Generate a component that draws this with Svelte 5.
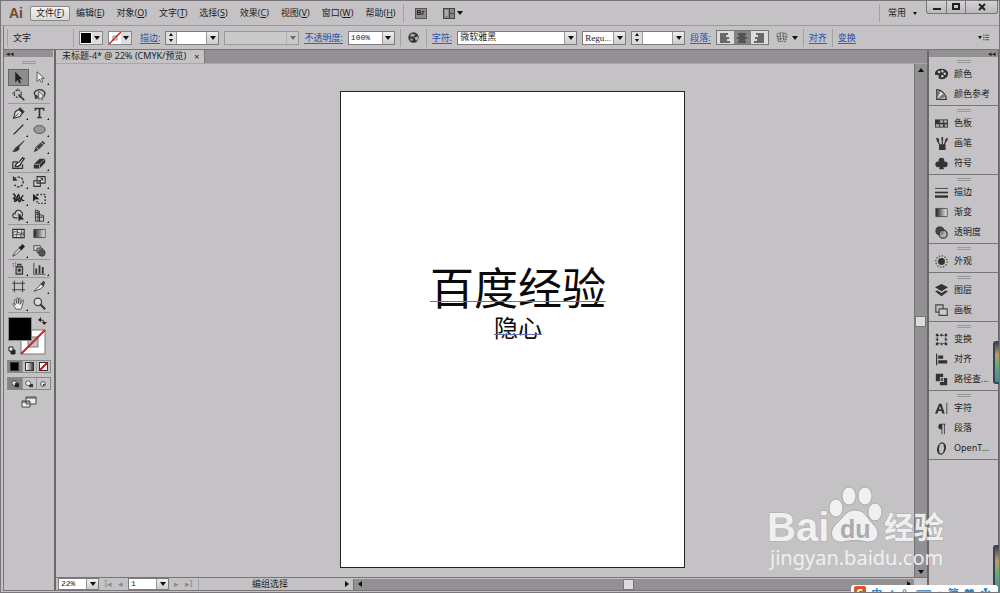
<script lang="ts">
  type Menu = { label: string; key: string };
  type Tool = { icon: string; name: string; more?: boolean };

  const menus: Menu[] = [
    { label: '文件', key: 'F' },
    { label: '编辑', key: 'E' },
    { label: '对象', key: 'O' },
    { label: '文字', key: 'T' },
    { label: '选择', key: 'S' },
    { label: '效果', key: 'C' },
    { label: '视图', key: 'V' },
    { label: '窗口', key: 'W' },
    { label: '帮助', key: 'H' }
  ];

  const toolGroups: Tool[][] = [
    [
      { icon: 'select', name: '选择工具' },
      { icon: 'direct', name: '直接选择工具', more: true },
      { icon: 'wand', name: '魔棒工具' },
      { icon: 'lasso', name: '套索工具' }
    ],
    [
      { icon: 'pen', name: '钢笔工具', more: true },
      { icon: 'type', name: '文字工具', more: true },
      { icon: 'line', name: '直线段工具', more: true },
      { icon: 'ellipse', name: '椭圆工具', more: true },
      { icon: 'brush', name: '画笔工具' },
      { icon: 'pencil', name: '铅笔工具', more: true },
      { icon: 'blob', name: '斑点画笔工具' },
      { icon: 'eraser', name: '橡皮擦工具', more: true }
    ],
    [
      { icon: 'rotate', name: '旋转工具', more: true },
      { icon: 'scale', name: '比例缩放工具', more: true },
      { icon: 'warp', name: '变形工具', more: true },
      { icon: 'free', name: '自由变换工具' },
      { icon: 'shape', name: '形状生成器工具', more: true },
      { icon: 'perspective', name: '透视网格工具', more: true }
    ],
    [
      { icon: 'mesh', name: '网格工具' },
      { icon: 'gradient', name: '渐变工具' },
      { icon: 'dropper', name: '吸管工具', more: true },
      { icon: 'blend', name: '混合工具' }
    ],
    [
      { icon: 'spray', name: '符号喷枪工具', more: true },
      { icon: 'graph', name: '柱形图工具', more: true }
    ],
    [
      { icon: 'artboard', name: '画板工具' },
      { icon: 'slice', name: '切片工具', more: true },
      { icon: 'hand', name: '抓手工具', more: true },
      { icon: 'zoom', name: '缩放工具' }
    ]
  ];

  const panels = [
    [['palette', '颜色'], ['guide', '颜色参考']],
    [['swatches', '色板'], ['brushes', '画笔'], ['club', '符号']],
    [['strokes', '描边'], ['gradient', '渐变'], ['opacity', '透明度']],
    [['appearance', '外观']],
    [['layers', '图层'], ['boards', '画板']],
    [['transform', '变换'], ['align', '对齐'], ['pathfinder', '路径查...']],
    [['char', '字符'], ['para', '段落'], ['opentype', 'OpenT...']]
  ];

  // all glyphs are drawn on a 16 x 16 grid
  const icons: Record<string, string> = {
    select: '<path d="M4 1v13l3-3 2 4 2-1-2-4h4z" fill="#222"/>',
    direct: '<path d="M5 1v12l3-3 2 4 2-1-2-4h4z" fill="#eee" stroke="#444"/>',
    wand: '<circle cx="7" cy="7" r="4.5" fill="none" stroke="#333" stroke-width="1.6" stroke-dasharray="2 1.6"/><path d="M8 8l7 7" stroke="#333" stroke-width="2"/><path d="M7 0v4M0 7h4" stroke="#555"/>',
    lasso: '<path d="M4 10C-1 7 3 2 8 2s9 4 5 8M4 10c-3 2 0 4 1 2s-1-3-2-2" fill="none" stroke="#333" stroke-width="1.6"/><path d="M7 4v10l2-2 2 3 1-1-1-3h3z" fill="#eee" stroke="#444"/>',
    pen: '<path d="M2 15L4 7l5-3 4 4-3 5z" fill="#ddd" stroke="#333" stroke-width="1.4"/><path d="M2 15l6-6M10 2l5 5-2 2-5-5z" stroke="#333" fill="#333"/>',
    type: '<path d="M2 2h12v4h-1l-1-2H9v9l2 1v1H5v-1l2-1V4H4L3 6H2z" fill="#333"/>',
    line: '<path d="M2 14L14 2" stroke="#222" stroke-width="1.5"/>',
    ellipse: '<ellipse cx="8" cy="8" rx="7" ry="5" fill="#999" stroke="#444"/>',
    brush: '<path d="M15 1L8 9l-1-1zM7 8l2 2c-1 4-5 4-8 4 3-1 2-5 6-6z" fill="#333" stroke="#333"/>',
    pencil: '<path d="M1 15l2-6 9-8 3 3-9 9z" fill="#444"/><path d="M4 9l3 3M10 3l3 3" stroke="#ddd"/>',
    blob: '<path d="M1 6h6M1 6v8h12V9" fill="none" stroke="#333" stroke-width="1.5"/><path d="M4 12c0-5 3-4 5-6l4-5 2 1-4 6c-1 4-4 4-7 4z" fill="#eee" stroke="#222" stroke-width="1.5"/>',
    eraser: '<path d="M1 9l7-7h7v5l-7 7H1z" fill="#333"/><path d="M1 9h7l7-7M8 9v5" fill="none" stroke="#aaa"/>',
    rotate: '<path d="M3 5a6 6 0 1 1 0 7" fill="none" stroke="#333" stroke-width="1.6" stroke-dasharray="3 1.5"/><path d="M1 1v6h6z" fill="#333"/>',
    scale: '<path d="M5 2h10v8H5zM1 7h8v7H1z" fill="#ccc" stroke="#333" stroke-width="1.3"/><path d="M7 9l5-5M9 4h3v3" fill="none" stroke="#222"/>',
    warp: '<path d="M1 3c3-2 3 4 2 8 3 3 3-5 5-8 3 2-1 7 1 9 3 0 1-6 5-8M1 8c4-2 3 5 7 1s4 4 7 1" fill="none" stroke="#222" stroke-width="1.6"/><path d="M2 2l7 9" stroke="#333" stroke-width="1.6"/>',
    free: '<path d="M5 3h10v11H5z" fill="none" stroke="#333" stroke-width="1.7" stroke-dasharray="2 2"/><path d="M0 2v10l3-3h5z" fill="#222"/>',
    shape: '<path d="M7 11H4a3 3 0 0 1 0-6 4 4 0 0 1 7-2 4 4 0 0 1 1 6" fill="#ccc" stroke="#333" stroke-width="1.4"/><path d="M4 7h7" stroke="#555" stroke-dasharray="1 1"/><path d="M8 5v10l3-2h4z" fill="#222"/>',
    perspective: '<path d="M3 1v14M3 1l5 2v12M3 6l10 2v7H3M8 7v8M3 10h10M3 4l5 1M6 2v13" fill="none" stroke="#333" stroke-width="1.1"/>',
    mesh: '<path d="M1 3h14v10H1z" fill="#ddd" stroke="#333" stroke-width="1.4"/><path d="M1 7c5-4 8 3 14 0M1 11c5-5 8 1 14-2M5 3c5 4-2 6 1 10M11 3c3 3-2 7 1 10" fill="none" stroke="#333"/>',
    gradient: '<defs><linearGradient id="ramp"><stop stop-color="#222"/><stop offset="1" stop-color="#eee"/></linearGradient></defs><path d="M1 3h14v10H1z" fill="url(#ramp)" stroke="#444"/>',
    dropper: '<path d="M1 15l2-4 6-6 2 2-6 6z" fill="#ddd" stroke="#333"/><path d="M8 4l2-1 3-3 3 3-3 3-1 2z" fill="#222"/>',
    blend: '<path d="M1 2h8v6H1z" fill="#ccc" stroke="#444"/><path d="M5 5h7v6H5z" fill="#888" stroke="#444"/><circle cx="11" cy="11" r="4" fill="#555" stroke="#333"/>',
    spray: '<path d="M5 6h8v9H5zM7 3h4v3H7z" fill="#aaa" stroke="#333" stroke-width="1.4"/><circle cx="9" cy="10" r="2" fill="#333"/><path d="M1 2h1M4 1h1M1 5h1M4 4h1" stroke="#333" stroke-width="1.5"/>',
    graph: '<path d="M1 1v14h14" fill="none" stroke="#333"/><path d="M4 14V8M8 14V4M12 14V6" stroke="#333" stroke-width="2.2"/>',
    artboard: '<path d="M3 1v14M13 1v14M0 4h16M0 12h16" stroke="#444" stroke-width="1.3"/>',
    slice: '<path d="M1 14l9-9 3 3-4 3z" fill="#eee" stroke="#333"/><path d="M9 5l4-4 2 2-2 5z" fill="#444"/>',
    hand: '<path d="M5 15L1 9c0-2 2-1 3 1L3 4c0-2 2-1 2 0l1 4V2c0-2 2-1 2 0v6l1-6c0-1 2-1 2 1l-1 6 3-5c1-1 2 0 1 1l-2 8-1 2z" fill="#eee" stroke="#444"/>',
    zoom: '<circle cx="6" cy="6" r="4.5" fill="#ddd" stroke="#444" stroke-width="1.5"/><path d="M9 9l6 6" stroke="#333" stroke-width="2.4"/>',
    palette: '<path d="M8 1c5 0 9 3 8 7-1 6-9 7-11 5s1-3-1-4-4 1-4-2c0-4 4-6 8-6z" fill="#333"/><g fill="#ccc"><circle cx="5" cy="5" r="1.500"/><circle cx="9" cy="4" r="1.500"/><circle cx="12" cy="7" r="1.500"/><circle cx="9" cy="10" r="1.500"/></g>',
    guide: '<path d="M2 2c6 0 12 6 12 12H2z" fill="#ddd" stroke="#333" stroke-width="1.4"/><path d="M2 14L2 2l5 2zM2 14l8-7 3 4z" fill="#777"/>',
    swatches: '<path d="M0 3h16v10H0z" fill="#333"/><path d="M6 4h4v3H6zM11 4h4v3h-4zM1 9h4v3H1zM6 9h4v3H6zM12 9h3v3h-3z" fill="#aaa"/>',
    brushes: '<path d="M5 9h8v7H5z" fill="#333"/><path d="M6 10L3 4M9 10V3M11 10l3-6" stroke="#333" stroke-width="1.4"/><path d="M1 1l4 1v4H3zM8 0h2v4H8zM13 2l3-1-1 4-3 1z" fill="#333"/>',
    club: '<g fill="#333"><circle cx="8" cy="4.500" r="3.500"/><circle cx="4" cy="9" r="3.500"/><circle cx="12" cy="9" r="3.500"/><path d="M7 7h2l2 8H5z"/></g>',
    strokes: '<path d="M0 3h16" stroke="#333"/><path d="M0 8h16" stroke="#333" stroke-width="2"/><path d="M0 13h16" stroke="#333" stroke-width="3"/>',
    opacity: '<circle cx="6" cy="6" r="5" fill="#444" stroke="#333"/><circle cx="10" cy="10" r="5" fill="#aaa" fill-opacity=".7" stroke="#333" stroke-width="1.4"/>',
    appearance: '<circle cx="8" cy="8" r="4.300" fill="#333"/><circle cx="8" cy="8" r="7" fill="none" stroke="#333" stroke-width="1.4" stroke-dasharray="1.600 2"/>',
    layers: '<path d="M8 0l8 4-8 5-8-5z" fill="#333"/><path d="M0 9l3-1 5 3 5-3 3 1-8 6z" fill="#333"/>',
    boards: '<path d="M1 1h9v9H1z" fill="none" stroke="#444" stroke-width="1.4"/><path d="M5 6h10v8H5z" fill="#ccc" stroke="#444" stroke-width="1.4"/>',
    transform: '<path d="M3 3h10v10H3z" fill="none" stroke="#333" stroke-dasharray="2 1"/><path d="M1 1h3v3H1zM7 1h2v3H7zM12 1h3v3h-3zM1 7h3v2H1zM12 7h3v2h-3zM1 12h3v3H1zM7 12h2v3H7zM12 12h3v3h-3z" fill="#333"/>',
    align: '<path d="M2 1v14" stroke="#333" stroke-width="1.5"/><path d="M4 3h6v4H4zM4 9h11v4H4z" fill="#333"/>',
    pathfinder: '<path d="M1 1h9v4H6v5H1z" fill="#333"/><path d="M11 6h4v9H6v-4h5z" fill="#333"/><path d="M7 6h3v4H7z" fill="#555"/>',
    char: '<path d="M0 14L5 2h3l4 12H9l-1-3H4l-1 3zm5-5h3L6 5z" fill="#333" fill-rule="evenodd"/><path d="M14.500 1v14" stroke="#333"/>',
    para: '<path d="M13 2H6a4 4 0 0 0 0 7h2v6h1V3h2v12h1V3h1z" fill="#333"/>',
    opentype: '<ellipse cx="8" cy="8" rx="4.500" ry="7" transform="rotate(15 8 8)" fill="none" stroke="#333" stroke-width="1.600"/><path d="M5 4q-2 5 0 9M11 3q2 4 0 9" fill="none" stroke="#333" stroke-width="1.500"/>'
  };

  const aligns = [
    { name: '左对齐', d: 'M2 2h8M2 4h6M2 6h9M2 8h7M2 10h10' },
    { name: '居中对齐', d: 'M3 2h8M4 4h6M2 6h10M4 8h6M3 10h8' },
    { name: '右对齐', d: 'M4 2h8M6 4h6M3 6h9M5 8h7M2 10h10' }
  ];

  let activeTool = $state('select');
  let activeAlign = $state(1);
  let vScroll = $state(49);
  let hScroll = $state(48);
</script>

{#snippet icon(name: string)}
  <svg viewBox="0 0 16 16" aria-hidden="true">{@html icons[name]}</svg>
{/snippet}

{#snippet combo(label: string, value: string, size: string, spin = false)}
  <span class="combo {size}">
    {#if spin}
      <span class="spin">
        <button aria-label="{label} 增加"><i class="tri up"></i></button>
        <button aria-label="{label} 减少"><i class="tri down"></i></button>
      </span>
    {/if}
    <input type="text" aria-label={label} {value} />
    <button class="drop" aria-label="{label} 选项"><i class="tri down"></i></button>
  </span>
{/snippet}

<div class="app">
  <header class="menubar">
    <strong class="logo">Ai</strong>
    <nav>
      {#each menus as menu, i}
        <button class="menu" class:open={i === 0}>{menu.label}(<u>{menu.key}</u>)</button>
      {/each}
    </nav>
    <i class="rule"></i>
    <button class="bridge" aria-label="Bridge">Br</button>
    <button class="arrange" aria-label="排列文档">
      <svg viewBox="0 0 12 11"><path d="M0 0h12v11H0z" fill="#444" /><path d="M1 1h5v9H1zM7 1h4v4H7zM7 6h4v4H7z" fill="#888" /><path d="M2 3h3M2 5h3M2 7h3" stroke="#ccc" /></svg>
      <i class="tri down"></i>
    </button>
    <span class="space"></span>
    <i class="rule"></i>
    <button class="workspace">常用 <i class="tri down tiny"></i></button>
    <div class="window-buttons">
      <button aria-label="最小化"><svg viewBox="0 0 10 8"><path d="M1 6h8" stroke="#222" stroke-width="2" /></svg></button>
      <button aria-label="最大化"><svg viewBox="0 0 10 8"><path d="M2 1h6v5H2z" fill="none" stroke="#222" stroke-width="2" /></svg></button>
      <button aria-label="关闭"><svg viewBox="0 0 10 8"><path d="M2 1l6 6M8 1L2 7" stroke="#222" stroke-width="2" /></svg></button>
    </div>
  </header>

  <div class="frame">
    <div class="options">
      <i class="rule"></i>
      <span class="context">文字</span>
      <i class="rule"></i>
      <div class="paints">
        <button class="paint" aria-label="填色"><b class="black"></b><i class="tri down"></i></button>
        <button class="paint" aria-label="描边颜色">
          <svg viewBox="0 0 12 12"><path d="M0 0h12v12H0z" fill="#fff" /><path d="M4 4h4v4H4z" fill="none" stroke="#888" /><path d="M0 12L12 0" stroke="#c22" stroke-width="1.500" /></svg>
          <i class="tri down"></i>
        </button>
      </div>
      <a href="#stroke">描边:</a>
      {@render combo('描边粗细', '', 'w54', true)}
      <span class="combo w75 off">
        <input type="text" aria-label="画笔定义" disabled />
        <button class="drop" disabled aria-label="画笔定义 选项"><i class="tri down"></i></button>
      </span>
      <a href="#opacity">不透明度:</a>
      {@render combo('不透明度', '100%', 'w47')}
      <i class="rule"></i>
      <button class="plain" aria-label="重新着色图稿">
        <svg viewBox="0 0 16 16"><circle cx="8" cy="8" r="7.500" fill="#333" /><path d="M2 6l4-4 5 2-3 3zM9 8l5-2 1 4-3 3z" fill="#aaa" /><circle cx="5" cy="11" r="2" fill="#999" /></svg>
      </button>
      <i class="rule"></i>
      <a href="#character">字符:</a>
      {@render combo('字体', '微软雅黑', 'w120')}
      {@render combo('字体样式', 'Regu...', 'w44')}
      {@render combo('字体大小', '', 'w54', true)}
      <a href="#paragraph">段落:</a>
      <div class="aligns">
        {#each aligns as item, i}
          <button class:on={activeAlign === i} aria-label={item.name} onclick={() => (activeAlign = i)}>
            <svg viewBox="0 0 14 12"><path d={item.d} stroke="#444" stroke-width="1.400" /></svg>
          </button>
        {/each}
      </div>
      <button class="envelope" aria-label="制作封套">
        <svg viewBox="0 0 14 12"><path d="M1 2c4-2 8-2 12 0l-2 9c-3-1-5-1-8 0zM1 5c4-1 8-1 12 0M2 8c4-1 6-1 10 0M5 1v9M9 1v9" fill="none" stroke="#444" stroke-dasharray="2 1" /></svg>
        <i class="tri down"></i>
      </button>
      <i class="rule"></i>
      <a href="#align">对齐</a>
      <i class="rule"></i>
      <a href="#transform">变换</a>
      <span class="space"></span>
      <button class="panel-menu" aria-label="面板菜单">
        <i class="tri down tiny"></i>
        <svg viewBox="0 0 8 8"><path d="M0 1h2M3 1h5M0 4h2M3 4h5M0 7h2M3 7h5" stroke="#333" /></svg>
      </button>
    </div>

    <div class="work">
      <aside class="tools">
        <div class="dock-head"><button aria-label="折叠工具栏">◂◂</button></div>
        <i class="grip"></i>
        {#each toolGroups as group}
          <div class="tool-group">
            {#each group as tool}
              <button
                class:more={tool.more}
                class:active={activeTool === tool.icon}
                aria-label={tool.name}
                onclick={() => (activeTool = tool.icon)}>{@render icon(tool.icon)}</button>
            {/each}
          </div>
        {/each}
        <svg class="fill-stroke" viewBox="0 0 42 40" role="img" aria-label="填色和描边">
          <path d="M13 14h24v24H13z" fill="#fff" stroke="#777" />
          <path d="M20 21h10v10H20z" fill="#c4c2c4" stroke="#777" />
          <path d="M13 38L37 14" stroke="#c22" stroke-width="2" />
          <path d="M.5 1.500h23v23H.5z" fill="#000" stroke="#888" />
          <path d="M32 4h2q2 0 2 3" fill="none" stroke="#222" /><path d="M33 1v5l-3-2zM34 6h5l-3 3z" fill="#222" />
          <path d="M3 34h4v4H3z" fill="#222" stroke="#222" /><path d="M1 31h4v4H1z" fill="#eee" stroke="#222" />
        </svg>
        <div class="modes">
          <button class="on" aria-label="颜色"><b class="black"></b></button>
          <button aria-label="渐变"><b class="ramp"></b></button>
          <button aria-label="无"><b class="none"></b></button>
        </div>
        <div class="modes">
          <button class="on" aria-label="正常绘图"><svg viewBox="0 0 12 10"><circle cx="5" cy="4" r="3" fill="#ddd" stroke="#333" /><path d="M6 4h5v5H6z" fill="#222" /></svg></button>
          <button aria-label="背面绘图"><svg viewBox="0 0 12 10"><path d="M6 5h5v4H6z" fill="#333" /><circle cx="5" cy="4" r="3" fill="#eee" stroke="#444" /></svg></button>
          <button aria-label="内部绘图"><svg viewBox="0 0 12 10"><circle cx="6" cy="5" r="3" fill="#eee" stroke="#333" /><path d="M6 5h2v2H6z" fill="#222" /></svg></button>
        </div>
        <button class="screen" aria-label="更改屏幕模式">
          <svg viewBox="0 0 16 12"><path d="M5 1h10v7H5zM1 5h8v6H1z" fill="#eee" stroke="#444" /><path d="M5 2h10M1 6h8" stroke="#444" /></svg>
        </button>
      </aside>

      <main>
        <div class="tabs">
          <div class="tab"><span>未标题-4* @ 22% (CMYK/预览)</span><button aria-label="关闭文档">×</button></div>
        </div>
        <div class="viewport">
          <div class="canvas">
            <div class="artboard">
              <p class="headline">百度经验</p>
              <p class="author">隐心</p>
            </div>
          </div>
          <div class="scroll vertical">
            <button aria-label="向上滚动"><i class="tri up"></i></button>
            <div class="track"><i class="thumb" style="top: {vScroll}%"></i></div>
            <button aria-label="向下滚动"><i class="tri down"></i></button>
          </div>
        </div>
        <footer class="status">
          {@render combo('缩放', '22%', 'w40')}
          <span class="pager">
            <button aria-label="首个画板" disabled>I◂</button>
            <button aria-label="上一画板" disabled>◂</button>
          </span>
          {@render combo('画板', '1', 'w40')}
          <span class="pager">
            <button aria-label="下一画板" disabled>▸</button>
            <button aria-label="末个画板" disabled>▸I</button>
          </span>
          <i class="rule"></i>
          <span class="mode">编组选择</span>
          <button class="mode-menu" aria-label="状态栏选项"><i class="tri right"></i></button>
          <div class="scroll horizontal">
            <button aria-label="向左滚动"><i class="tri left"></i></button>
            <div class="track"><i class="thumb" style="left: {hScroll}%"></i></div>
            <button aria-label="向右滚动"><i class="tri right"></i></button>
          </div>
        </footer>
      </main>

      <aside class="dock">
        <div class="dock-head right"><button aria-label="折叠面板">◂◂</button></div>
        {#each panels as group}
          <section>
            <i class="grip"></i>
            {#each group as [name, label]}
              <button>{@render icon(name)}<span>{label}</span></button>
            {/each}
          </section>
        {/each}
      </aside>
    </div>
  </div>

  <svg class="watermark" viewBox="0 0 190 90" role="img" aria-label="Baidu 经验">
    <g fill="#f4f4f4" stroke="#aaa8aa" stroke-width="1">
      <ellipse cx="75" cy="23" rx="7" ry="9" />
      <ellipse cx="88" cy="11" rx="7" ry="9" />
      <ellipse cx="104" cy="11" rx="7" ry="9" />
      <ellipse cx="114" cy="27" rx="7" ry="9" />
      <path d="M94 25c10 0 12 8 18 14 9 8 5 19-6 18-8-2-16-2-24 0-12 1-15-10-7-18 7-6 10-14 19-14z" />
      <g paint-order="stroke">
        <text class="brand" x="6" y="56">Bai</text>
        <text class="cn" x="123" y="53">经验</text>
      </g>
      <text class="url" x="9" y="80" stroke="none">jingyan.baidu.com</text>
    </g>
    <text class="du" x="79" y="53">du</text>
  </svg>

  <i class="gadget upper"></i>
  <i class="gadget lower"></i>
  <div class="ime">
    <span class="sogou">S</span><span>中</span><span>♟</span><span>°,</span><span>⌨</span><span class="faint">●</span><span>简</span><span>♥</span><span>✿</span>
  </div>
</div>

<style>
  :global(body) {
    margin: 0;
    overflow: hidden;
  }
  .app {
    --bg: #c4c2c4;
    --mid: #929092;
    --edge: #777577;
    --ink: #222;
    position: relative;
    display: flex;
    flex-direction: column;
    box-sizing: border-box;
    height: 100vh;
    overflow: hidden;
    border: 1px solid var(--edge);
    background: var(--bg);
    color: var(--ink);
    font: 9px/12px 'Noto Sans', 'Noto Sans CJK SC', sans-serif;
  }
  .app *,
  .app *::after {
    box-sizing: border-box;
  }
  button,
  input {
    margin: 0;
    padding: 0;
    border: 0;
    border-radius: 0;
    background: none;
    color: inherit;
    font: inherit;
  }
  svg {
    display: block;
  }
  .space {
    flex: 1;
  }
  .rule {
    flex: none;
    width: 1px;
    height: 18px;
    background: #a3a1a3;
  }
  .tri {
    flex: none;
    width: 0;
    height: 0;
    border: 3px solid transparent;
  }
  .tri.down {
    border-top: 4px solid #111;
    border-bottom: 0;
  }
  .tri.up {
    border-bottom: 4px solid #111;
    border-top: 0;
  }
  .tri.left {
    border-right: 4px solid #111;
    border-left: 0;
  }
  .tri.right {
    border-left: 4px solid #111;
    border-right: 0;
  }
  .tri.tiny {
    border-width: 3px 2px 0;
  }

  .menubar {
    display: flex;
    align-items: center;
    flex: none;
    height: 25px;
    border-bottom: 1px solid #9b999b;
  }
  .logo {
    width: 29px;
    padding-left: 8px;
    color: #6a4a2c;
    font: bold 14px/20px 'Liberation Sans', sans-serif;
  }
  nav {
    display: flex;
    margin-right: 1px;
  }
  .menu {
    height: 15px;
    padding: 0 5px;
    border: 1px solid transparent;
    border-radius: 2px;
    line-height: 12px;
    white-space: nowrap;
  }
  .menu.open {
    border-color: #888;
    background: linear-gradient(#f4f4f4, #d8d8d8);
  }
  .bridge {
    width: 12px;
    height: 11px;
    margin: 0 16px 0 11px;
    border: 1px solid #555;
    background: #8c8a8c;
    font: bold 7px/8px 'Liberation Sans', sans-serif;
  }
  .arrange {
    display: flex;
    align-items: center;
    gap: 2px;
  }
  .arrange svg {
    width: 12px;
    height: 11px;
  }
  .workspace {
    display: flex;
    align-items: center;
    gap: 7px;
    padding: 0 9px 0 8px;
  }
  .window-buttons {
    display: flex;
    align-self: flex-start;
    margin-right: 1px;
    border: 1px solid #777;
    border-top: 0;
    border-radius: 0 0 3px 3px;
    background: linear-gradient(#d4d2d4, #bbb9bb);
  }
  .window-buttons button {
    display: grid;
    place-items: center;
    width: 19px;
    height: 12px;
  }
  .window-buttons button + button {
    border-left: 1px solid #777;
  }
  .window-buttons button:last-child {
    width: 32px;
  }
  .window-buttons svg {
    width: 10px;
    height: 8px;
  }

  .frame {
    display: flex;
    flex: 1;
    flex-direction: column;
    min-height: 0;
    margin: 0 0 1px 2px;
    border: solid var(--edge);
    border-width: 0 0 1px 1px;
  }
  .options {
    display: flex;
    align-items: center;
    flex: none;
    gap: 5px;
    height: 24px;
    padding: 0 10px 0 3px;
    border-bottom: 1px solid var(--edge);
    white-space: nowrap;
  }
  .context {
    width: 55px;
  }
  .paints {
    display: flex;
    gap: 5px;
    padding-right: 3px;
  }
  .paint {
    display: flex;
    align-items: center;
    justify-content: space-between;
    width: 24px;
    height: 14px;
    padding-right: 2px;
    border: 1px solid #888;
    background: #ddd;
  }
  .black {
    width: 12px;
    height: 12px;
    border: 1px solid #fff;
    background: #000;
  }
  .paint svg {
    width: 12px;
    height: 12px;
  }
  .options a {
    border-bottom: 1px solid #3a62b4;
    color: #1f4fae;
    line-height: 11px;
    text-decoration: none;
  }
  .combo {
    display: flex;
    flex: none;
    height: 14px;
    border: 1px solid #7d7b7d;
    background: #fff;
    font-family: 'Liberation Mono', 'Noto Sans CJK SC', monospace;
    font-size: 8px;
  }
  .combo input {
    flex: 1;
    width: 0;
    min-width: 0;
    padding-left: 2px;
  }
  .drop {
    display: grid;
    place-items: center;
    width: 12px;
    border-left: 1px solid #999;
    background: linear-gradient(#eee, #ccc);
  }
  .spin {
    display: grid;
    width: 11px;
    border-right: 1px solid #999;
    background: #ddd;
  }
  .spin button {
    display: grid;
    place-items: center;
    height: 6px;
  }
  .spin .tri {
    border-width: 0 2px 3px;
  }
  .spin .tri.down {
    border-width: 3px 2px 0;
  }
  .off {
    border-color: #999;
    background: #cbc9cb;
  }
  .off .drop {
    background: none;
    opacity: 0.5;
  }
  .w40 {
    width: 41px;
  }
  .w44 {
    width: 44px;
    font-family: 'Liberation Serif', serif;
    font-size: 9px;
  }
  .w47 {
    width: 47px;
  }
  .w54 {
    width: 54px;
  }
  .w75 {
    width: 75px;
  }
  .w120 {
    width: 120px;
    font-size: 9px;
  }
  .plain {
    padding: 0 2px;
  }
  .plain svg {
    width: 11px;
    height: 11px;
  }
  .aligns {
    display: flex;
    border: 1px solid #777;
  }
  .aligns button {
    display: grid;
    place-items: center;
    width: 17px;
    height: 13px;
    background: #dddbdd;
  }
  .aligns .on {
    background: #858385;
  }
  .aligns svg {
    width: 14px;
    height: 12px;
  }
  .envelope {
    display: flex;
    align-items: center;
    gap: 4px;
    padding-left: 2px;
  }
  .envelope svg {
    width: 12px;
    height: 11px;
  }
  .panel-menu {
    display: flex;
    align-items: center;
    gap: 1px;
  }
  .panel-menu svg {
    width: 6px;
    height: 7px;
  }

  .work {
    display: flex;
    flex: 1;
    min-height: 0;
  }
  .tools {
    display: flex;
    flex: none;
    flex-direction: column;
    align-items: center;
    width: 52px;
    padding-right: 1px;
    border-right: 2px solid #69676a;
  }
  .dock-head {
    align-self: stretch;
    flex: none;
    height: 7px;
    background: var(--mid);
  }
  .dock-head button {
    display: block;
    padding-left: 2px;
    font-size: 7px;
    line-height: 7px;
  }
  .dock-head.right button {
    margin-left: auto;
    padding-right: 2px;
  }
  .grip {
    flex: none;
    width: 14px;
    height: 3px;
    margin: 4px auto 5px;
    border: solid #999;
    border-width: 1px 0;
  }
  .tool-group {
    display: grid;
    grid-template-columns: 21px 21px;
    border-bottom: 1px solid #999;
  }
  .tool-group button {
    position: relative;
    display: grid;
    place-items: center;
    height: 17px;
  }
  .tool-group svg {
    width: 13px;
    height: 13px;
  }
  .tool-group .active {
    border: 1px solid #666;
    background: #8f8d8f;
  }
  .tool-group .more::after {
    position: absolute;
    right: 1px;
    bottom: 1px;
    border: 1px solid #111;
    border-top-color: transparent;
    border-left-color: transparent;
    content: '';
  }
  .fill-stroke {
    flex: none;
    width: 42px;
    height: 40px;
    margin: 3px 0 4px;
  }
  .modes {
    display: flex;
    margin-bottom: 4px;
    border: 1px solid #888;
  }
  .modes button {
    display: grid;
    place-items: center;
    width: 14px;
    height: 11px;
  }
  .modes button + button {
    border-left: 1px solid #999;
  }
  .modes .on {
    background: #858385;
  }
  .modes b {
    width: 9px;
    height: 9px;
    border: 1px solid #333;
  }
  .modes svg {
    width: 10px;
    height: 8px;
  }
  .modes .ramp {
    background: linear-gradient(90deg, #fff, #444);
  }
  .modes .none {
    background: linear-gradient(135deg, #fff 42%, #c22 42% 58%, #fff 58%);
  }
  .screen svg {
    width: 16px;
    height: 12px;
    margin-top: 2px;
  }

  main {
    display: flex;
    flex: 1;
    flex-direction: column;
    min-width: 0;
  }
  .tabs {
    display: flex;
    flex: none;
    height: 14px;
    border-bottom: 1px solid #a9a7a9;
    background: var(--mid);
  }
  .tab {
    display: flex;
    gap: 8px;
    padding: 0 5px 0 6px;
    border-right: 1px solid #777;
    background: var(--bg);
    white-space: nowrap;
  }
  .viewport {
    display: flex;
    flex: 1;
    min-height: 0;
  }
  .canvas {
    position: relative;
    flex: 1;
    overflow: hidden;
  }
  .artboard {
    position: absolute;
    top: 27px;
    left: 284px;
    width: 345px;
    height: 477px;
    border: 1px solid #222;
    background: #fff;
  }
  .artboard p {
    position: relative;
    width: max-content;
    margin: 0;
    color: #0a0a0a;
    font-family: 'Noto Sans CJK SC', sans-serif;
  }
  /* text baseline shown by the selection */
  .artboard p::after {
    position: absolute;
    right: 0;
    bottom: 8px;
    left: 0;
    height: 1px;
    background: #6473b8;
    content: '';
  }
  .artboard .headline {
    margin-top: 170px;
    margin-left: 89px;
    font-size: 44px;
    line-height: 48px;
  }
  .artboard .author {
    margin-left: 153px;
    padding-top: 3px;
    font-size: 24px;
    line-height: 28px;
  }
  .artboard .author::after {
    bottom: 6px;
  }
  .scroll {
    display: flex;
    background: var(--mid);
  }
  .scroll button {
    display: grid;
    place-items: center;
    flex: none;
    width: 11px;
    height: 11px;
  }
  .track {
    position: relative;
    flex: 1;
  }
  .thumb {
    position: absolute;
    width: 11px;
    height: 11px;
    border: 1px solid #777;
    background: #dddbdd;
  }
  .vertical {
    flex-direction: column;
    width: 13px;
    border-left: 1px solid var(--edge);
  }
  .status {
    display: flex;
    align-items: center;
    flex: none;
    height: 13px;
    padding: 0 13px 0 2px;
    border-top: 1px solid var(--edge);
  }
  .status .combo {
    height: 12px;
  }
  .status .rule {
    height: 11px;
  }
  .pager {
    display: flex;
    justify-content: space-evenly;
    width: 29px;
    color: #8b898b;
  }
  .mode {
    width: 142px;
    text-align: center;
  }
  .mode-menu {
    display: grid;
    place-items: center;
    padding: 0 4px;
  }
  .horizontal {
    flex: 1;
    border-left: 1px solid var(--edge);
  }

  .dock {
    flex: none;
    width: 72px;
    border: solid #69676a;
    border-width: 0 1px 0 2px;
  }
  .dock section {
    padding-bottom: 1px;
    border-bottom: 1px solid var(--edge);
  }
  .dock .grip {
    display: block;
    margin-top: 3px;
    margin-bottom: 1px;
  }
  .dock section button {
    display: flex;
    align-items: center;
    gap: 6px;
    width: 100%;
    height: 20px;
    padding-left: 6px;
    white-space: nowrap;
  }
  .dock section svg {
    width: 13px;
    height: 13px;
  }

  .watermark {
    position: absolute;
    right: 48px;
    bottom: 17px;
    width: 190px;
    height: 90px;
    overflow: visible;
    opacity: 0.92;
  }
  .brand {
    font: bold 40px 'Liberation Sans', sans-serif;
  }
  .cn {
    font: bold 30px 'Noto Sans CJK SC', sans-serif;
  }
  .url {
    font: 20px 'Noto Sans', sans-serif;
  }
  .du {
    fill: #aaa8aa;
    font: bold 25px 'Liberation Sans', sans-serif;
  }
  .gadget {
    position: absolute;
    right: 0;
    width: 6px;
    height: 43px;
    border: 2px solid #3d4355;
    border-right: 0;
    border-radius: 3px 0 0 3px;
    background: linear-gradient(#445, #b5a060 30%, #62a87a 60%, #3f8a9a);
  }
  .upper {
    top: 340px;
  }
  .lower {
    top: 544px;
    height: 50px;
  }
  .ime {
    position: absolute;
    top: 584px;
    right: 1px;
    display: flex;
    justify-content: space-between;
    width: 147px;
    padding: 1px 7px 0 3px;
    border-radius: 3px 3px 0 0;
    background: #fff;
    color: #2b86c8;
    font: bold 11px/15px 'Noto Sans CJK SC', 'DejaVu Sans', sans-serif;
  }
  .sogou {
    width: 12px;
    border-radius: 2px;
    background: #d9572b;
    color: #fff;
    text-align: center;
  }
  .faint {
    color: #ddd;
    font-size: 6px;
  }
</style>
